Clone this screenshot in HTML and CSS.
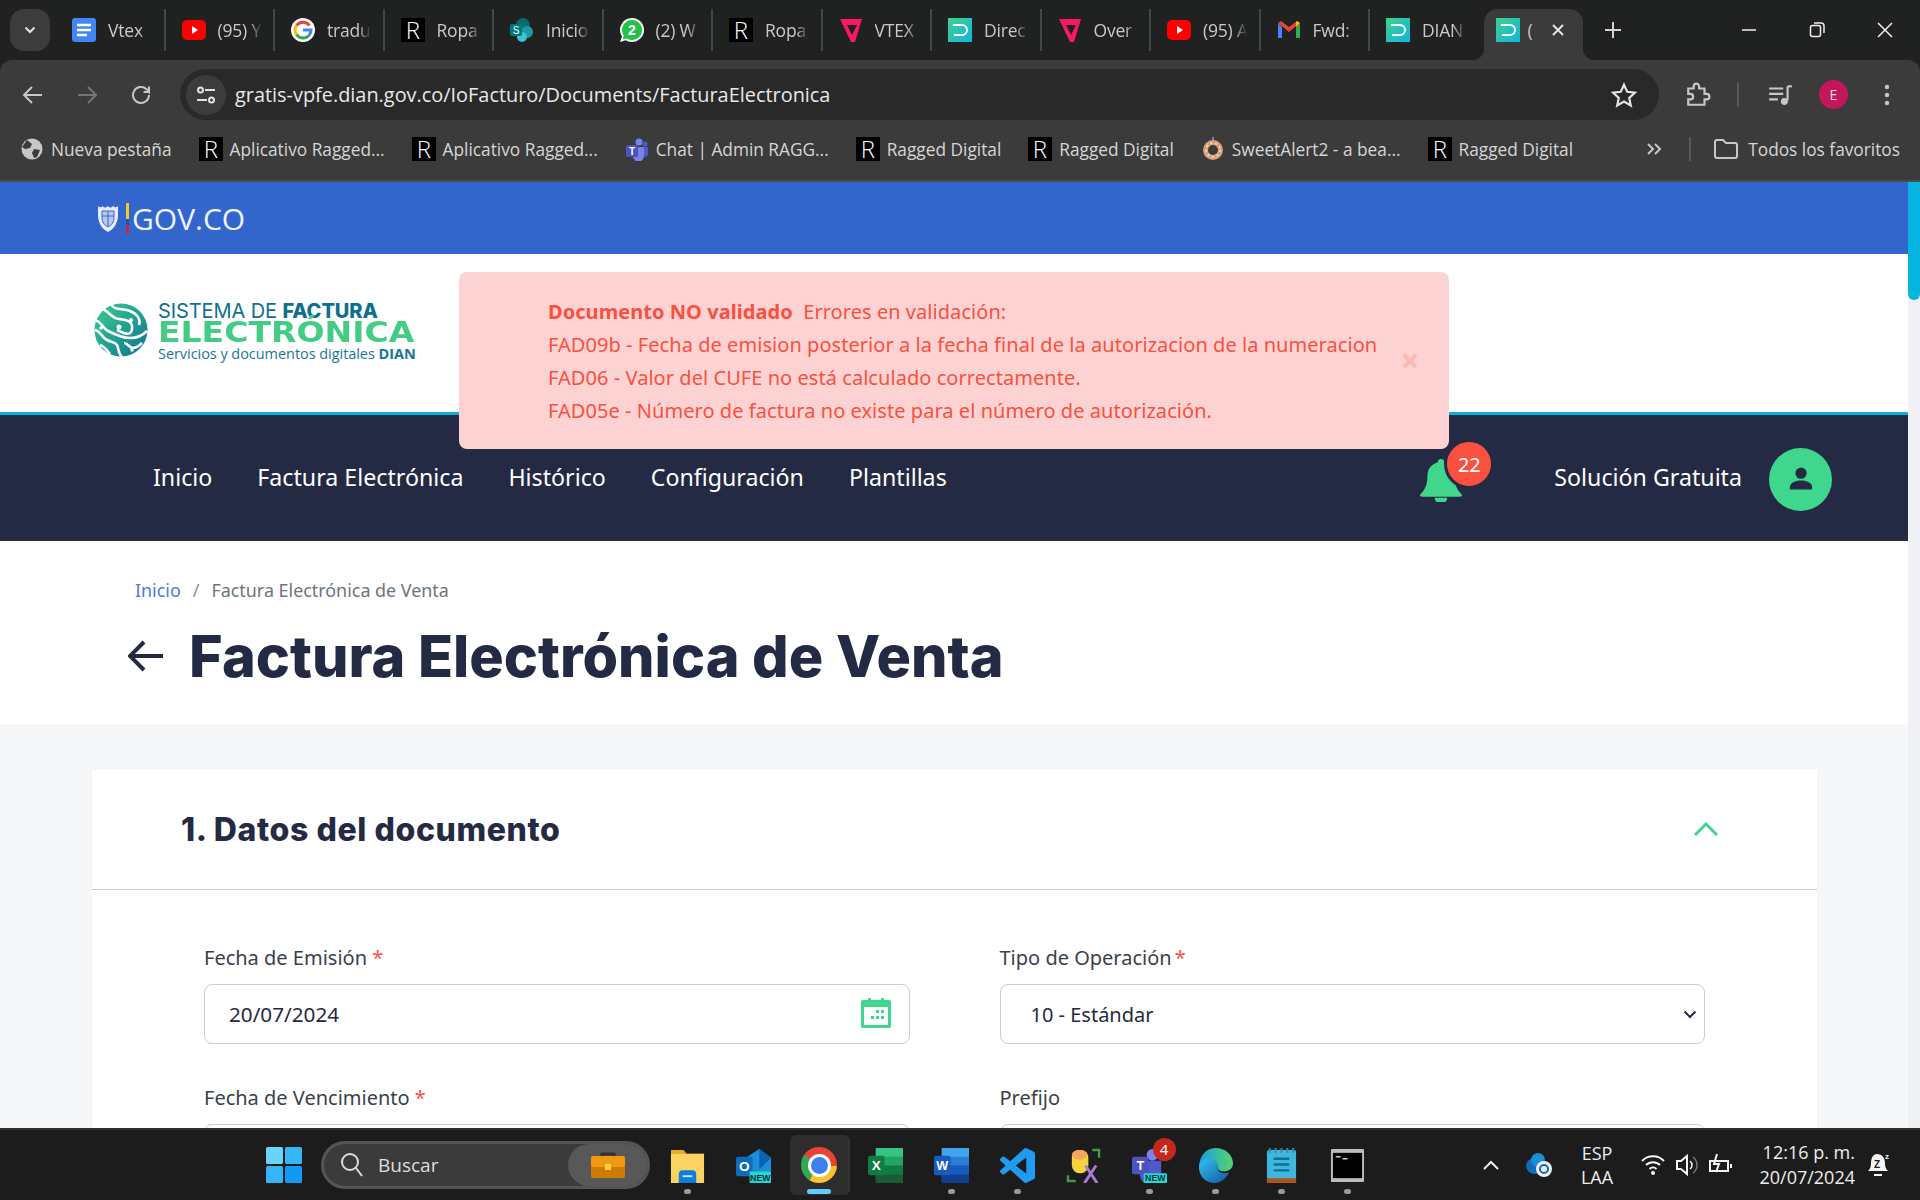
FILE: index.html
```html
<!DOCTYPE html>
<html lang="es">
<head>
<meta charset="utf-8">
<title>Factura Electrónica de Venta</title>
<link rel="stylesheet" href="styles.css">
</head>
<body>
<svg class="defs" width="0" height="0" aria-hidden="true">
  <defs>
    <linearGradient id="dianGrad" x1="0" y1="0" x2="1" y2="1"><stop offset="0" stop-color="#3fd08a"/><stop offset="1" stop-color="#10b6e0"/></linearGradient>
    <linearGradient id="edgeGrad" x1="0" y1="0" x2="1" y2="1"><stop offset="0" stop-color="#35c1f1"/><stop offset="1" stop-color="#0c59a4"/></linearGradient>
    <linearGradient id="edgeGreen" x1="0" y1="0" x2="1" y2="0"><stop offset="0" stop-color="#1b9de2"/><stop offset="1" stop-color="#54d66b"/></linearGradient>
    <linearGradient id="globeGrad" x1="0" y1="0" x2="1" y2="1"><stop offset="0" stop-color="#3fcf8e"/><stop offset=".55" stop-color="#1f9c92"/><stop offset="1" stop-color="#10708f"/></linearGradient>
    <symbol id="docs" viewBox="0 0 24 24"><rect x="0" y="0" width="24" height="24" rx="3" fill="#4285f4"/><path d="M5 7h14M5 12h14M5 17h10" stroke="#fff" stroke-width="2.4"/></symbol>
    <symbol id="yt" viewBox="0 0 24 24"><rect x="0" y="2" width="24" height="20" rx="5" fill="#f00"/><path d="M10 8l6 4-6 4z" fill="#fff"/></symbol>
    <symbol id="google" viewBox="0 0 24 24"><circle cx="12" cy="12" r="12" fill="#fff"/><path d="M18.500 7.500A8 8 0 0 0 5.500 7.500" fill="none" stroke="#ea4335" stroke-width="3"/><path d="M5.500 7.500a8 8 0 0 0 0 9" fill="none" stroke="#fbbc05" stroke-width="3"/><path d="M5.500 16.500a8 8 0 0 0 12.500 1" fill="none" stroke="#34a853" stroke-width="3"/><path d="M12 12h8a8 8 0 0 1-2 5.500" fill="none" stroke="#4285f4" stroke-width="3"/></symbol>
    <symbol id="sp" viewBox="0 0 24 24"><circle cx="13" cy="7" r="7" fill="#036c70"/><circle cx="17" cy="14" r="6" fill="#1a9ba1"/><circle cx="12" cy="19" r="5" fill="#37c6d0"/><rect x="0" y="6" width="12" height="12" rx="2" fill="#03787c"/><text x="6" y="16" class="svg-t" font-size="10" text-anchor="middle" fill="#fff">S</text></symbol>
    <symbol id="wa" viewBox="0 0 24 24"><path d="M12 0a12 12 0 0 0-10 18.500L0 24l5.700-1.800A12 12 0 1 0 12 0z" fill="#fff"/><path d="M12 2a10 10 0 0 0-8.300 15.500L2.700 21.500l4-1.100A10 10 0 1 0 12 2z" fill="#25c24a"/><text x="12" y="17" class="svg-t" font-size="14" font-weight="700" text-anchor="middle" fill="#fff">2</text></symbol>
    <symbol id="vtex" viewBox="0 0 24 24"><path d="M1 1h22l-7 23h-4z" fill="#f71963"/><path d="M8 7h10l-5 10z" fill="#1f2020"/></symbol>
    <symbol id="dian" viewBox="0 0 24 24"><rect width="24" height="24" fill="url(#dianGrad)"/><path d="M5 7h9a5 5 0 0 1 0 10H6" fill="none" stroke="#fff" stroke-width="2"/></symbol>
    <symbol id="gmail" viewBox="0 0 24 24"><path d="M1 5v15h4V9z" fill="#4285f4"/><path d="M23 5v15h-4V9z" fill="#34a853"/><path d="M1 5l11 9 11-9-3-2-8 6-8-6z" fill="#ea4335"/><path d="M19 9l4-4-3-2-1 1z" fill="#fbbc05"/></symbol>
    <symbol id="rlogo" viewBox="0 0 24 24"><rect width="24" height="24" fill="#000"/><text x="12" y="21" class="svg-r" font-size="24" text-anchor="middle" fill="#fff">R</text></symbol>
    <symbol id="globe" viewBox="0 0 24 24"><circle cx="12" cy="12" r="10.500" fill="#c7c7c7"/><path d="M7 3l5 4-2 4-5 1-3-2zM14 12l6 1-3 7-3 1-2-5z" fill="#3b3b3b"/></symbol>
    <symbol id="teamsb" viewBox="0 0 24 24"><circle cx="14" cy="5" r="3.500" fill="#7b83eb"/><circle cx="20" cy="7" r="2.500" fill="#5059c9"/><path d="M17 10h6v7a3 3 0 0 1-6 0z" fill="#5059c9"/><path d="M8 10h11v9a5 5 0 0 1-11 0z" fill="#7b83eb"/><rect x="1" y="8" width="12" height="12" rx="1.500" fill="#4b53bc"/><text x="7" y="18" class="svg-t" font-size="10" font-weight="700" text-anchor="middle" fill="#fff">T</text></symbol>
    <symbol id="donut" viewBox="0 0 24 24"><circle cx="12" cy="13" r="7.500" fill="none" stroke="#d9a27c" stroke-width="5"/><circle cx="12" cy="13" r="7" fill="none" stroke="#f3d6c0" stroke-width="2" stroke-dasharray="2 3"/><path d="M12 0v3" stroke="#8a78c0" stroke-width="2"/></symbol>
    <symbol id="person" viewBox="0 0 24 24"><circle cx="12" cy="7" r="4.800"/><path d="M2.500 21v-2.500c0-3.500 6-5.200 9.500-5.200s9.500 1.700 9.500 5.200V21z"/></symbol>
  </defs>
</svg>

<header class="chrome">
  <div class="tabstrip">
    <button class="tab-search" aria-label="Buscar pestañas"><svg width="12" height="8" viewBox="0 0 12 8"><path d="M1.500 1.500L6 6l4.500-4.500" fill="none" stroke="#e3e3e3" stroke-width="2"/></svg></button>
    <div class="tab"><svg class="fav"><use href="#docs"/></svg><span class="tab-t">Vtex</span></div>
    <div class="tab"><svg class="fav"><use href="#yt"/></svg><span class="tab-t">(95) Y</span></div>
    <div class="tab"><svg class="fav"><use href="#google"/></svg><span class="tab-t">tradu</span></div>
    <div class="tab"><svg class="fav"><use href="#rlogo"/></svg><span class="tab-t">Ropa</span></div>
    <div class="tab"><svg class="fav"><use href="#sp"/></svg><span class="tab-t">Inicio</span></div>
    <div class="tab"><svg class="fav"><use href="#wa"/></svg><span class="tab-t">(2) W</span></div>
    <div class="tab"><svg class="fav"><use href="#rlogo"/></svg><span class="tab-t">Ropa</span></div>
    <div class="tab"><svg class="fav"><use href="#vtex"/></svg><span class="tab-t">VTEX</span></div>
    <div class="tab"><svg class="fav"><use href="#dian"/></svg><span class="tab-t">Direc</span></div>
    <div class="tab"><svg class="fav"><use href="#vtex"/></svg><span class="tab-t">Over</span></div>
    <div class="tab"><svg class="fav"><use href="#yt"/></svg><span class="tab-t">(95) A</span></div>
    <div class="tab"><svg class="fav"><use href="#gmail"/></svg><span class="tab-t">Fwd:</span></div>
    <div class="tab tab-last"><svg class="fav"><use href="#dian"/></svg><span class="tab-t">DIAN</span></div>
    <div class="tab-active"><svg class="fav"><use href="#dian"/></svg><span class="tab-t tab-t-active">(</span><svg class="tab-x" width="14" height="14" viewBox="0 0 14 14"><path d="M2 2l10 10M12 2L2 12" stroke="#e8e8e8" stroke-width="1.800"/></svg></div>
    <svg class="newtab" width="18" height="18" viewBox="0 0 18 18"><path d="M9 1v16M1 9h16" stroke="#d5d5d5" stroke-width="2"/></svg>
    <div class="winctl">
      <svg width="16" height="16" viewBox="0 0 16 16"><path d="M1 8h14" stroke="#eee" stroke-width="1.500"/></svg>
      <svg width="16" height="16" viewBox="0 0 16 16"><rect x="1.500" y="3.500" width="10" height="11" rx="2" fill="none" stroke="#eee" stroke-width="1.500"/><path d="M5 1h7a3 3 0 0 1 3 3v7" fill="none" stroke="#eee" stroke-width="1.500"/></svg>
      <svg width="16" height="16" viewBox="0 0 16 16"><path d="M1 1l14 14M15 1L1 15" stroke="#eee" stroke-width="1.500"/></svg>
    </div>
  </div>
  <div class="toolbar">
    <svg class="tb-ic" viewBox="0 0 24 24"><path d="M21 12H4M11 4l-8 8 8 8" fill="none" stroke="#c7c7c7" stroke-width="2"/></svg>
    <svg class="tb-ic" viewBox="0 0 24 24"><path d="M3 12h17M13 4l8 8-8 8" fill="none" stroke="#757575" stroke-width="2"/></svg>
    <svg class="tb-ic" viewBox="0 0 24 24"><path d="M20 12a8 8 0 1 1-2.500-5.800L20 9V3.500M20 9h-5.500" fill="none" stroke="#c7c7c7" stroke-width="2"/></svg>
    <div class="omnibox">
      <span class="site-info"><svg width="20" height="20" viewBox="0 0 20 20"><circle cx="4.500" cy="5" r="2.500" fill="none" stroke="#e0e0e0" stroke-width="2"/><path d="M9 5h10M1 15h10" stroke="#e0e0e0" stroke-width="2"/><circle cx="15.500" cy="15" r="2.500" fill="none" stroke="#e0e0e0" stroke-width="2"/></svg></span>
      <span class="url">gratis-vpfe.dian.gov.co/IoFacturo/Documents/FacturaElectronica</span>
      <svg class="star" viewBox="0 0 24 24"><path d="M12 2.500l3 6.600 7.100.8-5.300 4.800 1.500 7-6.300-3.600-6.300 3.600 1.500-7L1.900 9.900 9 9.100z" fill="none" stroke="#e3e3e3" stroke-width="2"/></svg>
    </div>
    <svg class="tb-ext" viewBox="0 0 24 24"><path d="M3 6h5V4a2.500 2.500 0 0 1 5 0v2h5v5h2a2.500 2.500 0 0 1 0 5h-2v5H3v-5h2a2.500 2.500 0 0 0 0-5H3z" fill="none" stroke="#c7c7c7" stroke-width="2"/></svg>
    <span class="tb-sep"></span>
    <svg class="tb-media" viewBox="0 0 24 24"><path d="M2 6h13M2 11h13M2 16h8" stroke="#c7c7c7" stroke-width="2"/><path d="M19 4v13" stroke="#c7c7c7" stroke-width="2"/><path d="M19 4h4" stroke="#c7c7c7" stroke-width="2"/><circle cx="16" cy="18" r="3.200" fill="#c7c7c7"/></svg>
    <span class="avatar-e">E</span>
    <svg class="tb-dots" viewBox="0 0 6 24"><circle cx="3" cy="4" r="2.200" fill="#c7c7c7"/><circle cx="3" cy="12" r="2.200" fill="#c7c7c7"/><circle cx="3" cy="20" r="2.200" fill="#c7c7c7"/></svg>
  </div>
  <div class="bookmarks">
    <div class="bm"><svg class="bm-ic"><use href="#globe"/></svg><span>Nueva pestaña</span></div>
    <div class="bm"><svg class="bm-ic"><use href="#rlogo"/></svg><span>Aplicativo Ragged...</span></div>
    <div class="bm"><svg class="bm-ic"><use href="#rlogo"/></svg><span>Aplicativo Ragged...</span></div>
    <div class="bm"><svg class="bm-ic"><use href="#teamsb"/></svg><span>Chat | Admin RAGG...</span></div>
    <div class="bm"><svg class="bm-ic"><use href="#rlogo"/></svg><span>Ragged Digital</span></div>
    <div class="bm"><svg class="bm-ic"><use href="#rlogo"/></svg><span>Ragged Digital</span></div>
    <div class="bm"><svg class="bm-ic"><use href="#donut"/></svg><span>SweetAlert2 - a bea...</span></div>
    <div class="bm"><svg class="bm-ic"><use href="#rlogo"/></svg><span>Ragged Digital</span></div>
    <div class="bm-end">
      <svg width="16" height="14" viewBox="0 0 16 14"><path d="M2 2l5 5-5 5M9 2l5 5-5 5" fill="none" stroke="#c7c7c7" stroke-width="2"/></svg>
      <span class="bm-sep"></span>
      <svg width="26" height="22" viewBox="0 0 26 22"><path d="M2 4a2 2 0 0 1 2-2h6l3 3h9a2 2 0 0 1 2 2v11a2 2 0 0 1-2 2H4a2 2 0 0 1-2-2z" fill="none" stroke="#c7c7c7" stroke-width="2"/></svg>
      <span class="bm-all">Todos los favoritos</span>
    </div>
  </div>
</header>

<div class="viewport">
  <main class="page">
    <div class="gov-bar">
      <svg class="gov-shield" width="22" height="30" viewBox="0 0 22 30"><path d="M1 3c2 2 4 1 5 0 1 2 3 2 5 0 2 2 3 2 5 0 1 1 3 2 5 0v9c0 8-4 14-10 17C5 26 1 20 1 12z" fill="#e6ecf9"/><path d="M5 8h12v6c0 5-2 8-6 10-4-2-6-5-6-10z" fill="#b9c9ee" stroke="#3366cc"/><path d="M5 13h12M11 8v16" stroke="#3366cc"/></svg>
      <span class="gov-flag"></span>
      <span class="gov-text">GOV.CO</span>
    </div>
    <div class="brand">
      <svg class="brand-globe" width="54" height="54" viewBox="0 0 54 54">
        <circle cx="27" cy="27" r="26.500" fill="url(#globeGrad)"/>
        <g fill="none" stroke="#fff" stroke-width="2.600">
          <path d="M17 1c3 7 12 4 19 7s11 8 9 14"/>
          <path d="M8 6c6 1 9 9 17 10s14 2 13 10-9 4-15 1"/>
          <path d="M0 17c7 0 8 8 14 11s14 7 22 7 13-3 17-7"/>
          <path d="M1 27c6 1 6 7 12 10s10 2 11 8 2 7 4 9"/>
          <path d="M6 42c4 1 7 5 10 9"/>
          <path d="M30 40c4 0 5 5 9 5s7-3 9-5"/>
        </g>
        <circle cx="25" cy="24" r="2.500" fill="#fff"/><circle cx="37" cy="17" r="2" fill="#fff"/><circle cx="7" cy="25" r="1.800" fill="#fff"/><circle cx="38" cy="47" r="1.800" fill="#fff"/>
      </svg>
      <div class="brand-text">
        <div class="brand-l1">SISTEMA DE <b>FACTURA</b></div>
        <div class="brand-l2">ELECTRÓNICA</div>
        <div class="brand-l3">Servicios y documentos digitales <b>DIAN</b></div>
      </div>
      <span class="brand-rule"></span>
    </div>
    <nav class="mainnav">
      <a class="nav-i">Inicio</a>
      <a class="nav-i">Factura Electrónica</a>
      <a class="nav-i">Histórico</a>
      <a class="nav-i">Configuración</a>
      <a class="nav-i">Plantillas</a>
      <div class="nav-right">
        <div class="bell-wrap">
          <svg class="bell" viewBox="0 0 42 42"><path d="M21 1c2 0 3 1 3 3 7 2 10 7 10 14 0 7 2 12 6 16 2 2 1 3-1 3H3c-2 0-3-1-1-3 4-4 6-9 6-16 0-7 3-12 10-14 0-2 1-3 3-3z"/><path d="M15 38h12c0 3-2 5-6 5s-6-2-6-5z"/></svg>
          <span class="badge">22</span>
        </div>
        <span class="nav-user">Solución Gratuita</span>
        <span class="user-circle"><svg width="28" height="28"><use href="#person"/></svg></span>
      </div>
    </nav>
    <section class="titleblock">
      <div class="crumbs"><a class="crumb-a">Inicio</a><span class="crumb-s">/</span><span class="crumb-c">Factura Electrónica de Venta</span></div>
      <div class="title-row">
        <svg class="back" width="36" height="36" viewBox="0 0 36 36"><path d="M35 18H3M16 4L2 18l14 14" fill="none" stroke="#252a44" stroke-width="4"/></svg>
        <h1 class="title">Factura Electrónica de Venta</h1>
      </div>
    </section>
    <section class="content">
      <div class="card">
        <div class="card-head">
          <h2 class="card-title">1. Datos del documento</h2>
          <svg width="26" height="16" viewBox="0 0 26 16"><path d="M2 14L13 3l11 11" fill="none" stroke="#3fd68d" stroke-width="3"/></svg>
        </div>
        <div class="form">
          <div class="field">
            <label class="lbl">Fecha de Emisión <i>*</i></label>
            <div class="input-wrap">
              <input class="ctl" value="20/07/2024">
              <svg class="cal" width="30" height="30" viewBox="0 0 30 30"><path d="M7 0h3v4H7zM20 0h3v4h-3z" fill="#3fd68d"/><rect y="2" width="30" height="28" rx="2" fill="#3fd68d"/><rect x="3" y="9" width="24" height="18" fill="#fff"/><path d="M15 12h3v3h-3zM20 12h3v3h-3zM10 18h3v3h-3zM15 18h3v3h-3zM20 18h3v3h-3z" fill="#3fd68d"/></svg>
            </div>
          </div>
          <div class="field">
            <label class="lbl">Tipo de Operación<i class="star-tight">*</i></label>
            <div class="input-wrap">
              <select class="ctl sel"><option>10 - Estándar</option></select>
              <svg class="sel-chev" width="14" height="9" viewBox="0 0 14 9"><path d="M1.500 1.500L7 7l5.500-5.500" fill="none" stroke="#252a44" stroke-width="2"/></svg>
            </div>
          </div>
          <div class="field">
            <label class="lbl">Fecha de Vencimiento <i>*</i></label>
            <input class="ctl" value="">
          </div>
          <div class="field">
            <label class="lbl">Prefijo</label>
            <input class="ctl" value="">
          </div>
        </div>
      </div>
    </section>
  </main>
  <div class="scrollbar"><span class="thumb"></span></div>
  <div class="toast">
    <div class="toast-body">
      <p><b>Documento NO validado</b>&nbsp; Errores en validación:</p>
      <p>FAD09b - Fecha de emision posterior a la fecha final de la autorizacion de la numeracion</p>
      <p>FAD06 - Valor del CUFE no está calculado correctamente.</p>
      <p>FAD05e - Número de factura no existe para el número de autorización.</p>
    </div>
    <svg class="toast-x" width="16" height="16" viewBox="0 0 16 16"><path d="M2 2l12 12M14 2L2 14" stroke="#fdb9b6" stroke-width="4"/></svg>
  </div>
</div>

<footer class="taskbar">
  <svg class="win" width="36" height="36" viewBox="0 0 36 36"><rect width="17" height="17" x="0" y="0" rx="1.500" fill="#6cd4fb"/><rect width="17" height="17" x="19" y="0" rx="1.500" fill="#35b6f8"/><rect width="17" height="17" x="0" y="19" rx="1.500" fill="#35b6f8"/><rect width="17" height="17" x="19" y="19" rx="1.500" fill="#119af5"/></svg>
  <div class="searchpill">
    <svg width="24" height="26" viewBox="0 0 24 26"><circle cx="10" cy="10" r="8" fill="none" stroke="#ddd" stroke-width="2"/><path d="M16 16l6 8" stroke="#ddd" stroke-width="2"/></svg>
    <span class="buscar">Buscar</span>
    <span class="pill-in"><svg width="34" height="26" viewBox="0 0 34 26"><path d="M11 4V2h12v2" fill="none" stroke="#333" stroke-width="3"/><rect y="4" width="34" height="22" rx="2" fill="#d07a00"/><rect y="4" width="34" height="11" rx="2" fill="#f09a10"/><rect x="14" y="12" width="6" height="6" fill="#f7d24a"/></svg></span>
  </div>
  <div class="tb-cell"><svg class="app" viewBox="0 0 36 36"><path d="M1 2h13l3 4h18v30H1z" fill="#e9a825"/><rect x="1" y="6" width="34" height="30" fill="#fdd463"/><path d="M9 36v-9a4 4 0 0 1 4-4h10a4 4 0 0 1 4 4v9z" fill="#0f7cd6"/><rect x="13" y="28" width="10" height="2" fill="#bde3ff"/></svg><span class="dot"></span></div>
  <div class="tb-cell"><svg class="app" viewBox="0 0 36 36"><path d="M10 10L24 1l12 9v14H10z" fill="#1a8ed8"/><path d="M24 1l12 9-12 12z" fill="#0b62b0"/><rect x="0" y="9" width="17" height="20" rx="2" fill="#0f6cbd"/><text x="8.500" y="24" class="svg-t" font-size="14" font-weight="700" text-anchor="middle" fill="#fff">O</text><rect x="14" y="24" width="22" height="12" rx="1" fill="#24d6d6"/><text x="25" y="33.500" class="svg-t" font-size="9" font-weight="700" text-anchor="middle" fill="#033">NEW</text></svg><span class="dot dot-none"></span></div>
  <div class="tb-cell tb-cell-on"><span class="chrome-ic"><span class="chrome-in"></span></span><span class="dot dot-on"></span></div>
  <div class="tb-cell"><svg class="app" viewBox="0 0 36 36"><rect x="8" y="0" width="28" height="36" rx="2" fill="#21a366"/><rect x="8" y="0" width="28" height="9" fill="#33c481"/><rect x="8" y="18" width="28" height="9" fill="#107c41"/><rect x="8" y="27" width="28" height="9" fill="#185c37"/><rect x="0" y="8" width="17" height="20" rx="2" fill="#107c41"/><text x="8.500" y="23" class="svg-t" font-size="14" font-weight="700" text-anchor="middle" fill="#fff">X</text></svg><span class="dot dot-none"></span></div>
  <div class="tb-cell"><svg class="app" viewBox="0 0 36 36"><rect x="8" y="0" width="28" height="36" rx="2" fill="#2b7cd3"/><rect x="8" y="0" width="28" height="9" fill="#41a5ee"/><rect x="8" y="18" width="28" height="9" fill="#185abd"/><rect x="8" y="27" width="28" height="9" fill="#103f91"/><rect x="0" y="8" width="17" height="20" rx="2" fill="#185abd"/><text x="8.500" y="23" class="svg-t" font-size="13" font-weight="700" text-anchor="middle" fill="#fff">W</text></svg><span class="dot"></span></div>
  <div class="tb-cell"><svg class="app" viewBox="0 0 24 24"><path fill="#1f9cf0" d="M23.150 2.587L18.210.21a1.494 1.494 0 0 0-1.705.29l-9.460 8.630-4.120-3.128a.999.999 0 0 0-1.276.057L.327 7.261A1 1 0 0 0 .326 8.740L3.899 12 .326 15.260a1 1 0 0 0 .001 1.479L1.650 17.940a.999.999 0 0 0 1.276.057l4.120-3.128 9.460 8.630a1.492 1.492 0 0 0 1.704.29l4.942-2.377A1.500 1.500 0 0 0 24 20.060V3.939a1.500 1.500 0 0 0-.85-1.352zm-5.146 14.861L10.826 12l7.178-5.448v10.896z"/></svg><span class="dot"></span></div>
  <div class="tb-cell"><svg class="app" viewBox="0 0 36 36"><rect x="6" y="2" width="17" height="24" rx="8" fill="#f5d33f"/><ellipse cx="14" cy="7" rx="8" ry="5" fill="#f2a65a"/><path d="M2 28v6h8M27 2h7v8" fill="none" stroke="#3d9a46" stroke-width="2.500"/><path d="M19 36l12-18M32 36L20 18" stroke="#a77bd9" stroke-width="3"/></svg><span class="dot dot-none"></span></div>
  <div class="tb-cell"><span class="teams-wrap"><svg class="app" viewBox="0 0 36 36"><circle cx="21" cy="7" r="6" fill="#7b83eb"/><path d="M8 13h22v14a8 8 0 0 1-22 0z" fill="#5059c9"/><rect x="0" y="9" width="17" height="18" rx="2" fill="#4b53bc"/><text x="8.500" y="23" class="svg-t" font-size="13" font-weight="700" text-anchor="middle" fill="#fff">T</text><rect x="12" y="26" width="24" height="10" rx="1" fill="#24d6d6"/><text x="24" y="34.300" class="svg-t" font-size="9" font-weight="700" text-anchor="middle" fill="#033">NEW</text></svg><span class="teams-badge">4</span></span><span class="dot"></span></div>
  <div class="tb-cell"><svg class="app" viewBox="0 0 36 36"><path d="M18 0c10 0 18 7 18 16 0 5-4 8-9 8-6 0-7-3-7-5 0-6-7-9-13-6C1 16 1 20 1 20 1 9 8 0 18 0z" fill="url(#edgeGreen)"/><path d="M1 20c0-5 5-9 10-9 6 0 9 4 9 8 0 5 3 7 7 7 1 0 3 0 5-1-3 7-9 11-15 11C8 36 1 29 1 20z" fill="url(#edgeGrad)"/></svg><span class="dot"></span></div>
  <div class="tb-cell"><svg class="app" viewBox="0 0 30 36"><rect y="2" width="30" height="34" rx="2" fill="#3fb6dc"/><rect y="31" width="30" height="5" fill="#a8561c"/><path d="M3 0v5M9 0v5M15 0v5M21 0v5M27 0v5" stroke="#2b8cad" stroke-width="2"/><path d="M7 11h16M7 17h16M7 23h16" stroke="#136e90" stroke-width="2.500"/></svg><span class="dot"></span></div>
  <div class="tb-cell"><svg class="app" viewBox="0 0 34 36"><rect width="34" height="34" y="1" rx="1" fill="#b9bcc0"/><rect x="2" y="5" width="30" height="26" fill="#000"/><path d="M5 9h5M12 11h5" stroke="#ccc" stroke-width="1.500"/></svg><span class="dot"></span></div>
  <div class="tray">
    <svg class="tray-chev" width="18" height="12" viewBox="0 0 18 12"><path d="M2 10l7-7 7 7" fill="none" stroke="#f0f0f0" stroke-width="2"/></svg>
    <svg class="tray-od" width="28" height="26" viewBox="0 0 28 26"><ellipse cx="10" cy="14" rx="9" ry="8" fill="#0f6cbd"/><circle cx="13" cy="8" r="7" fill="#1a8ed8"/><circle cx="19" cy="17" r="8" fill="#f0f0f0"/><circle cx="19" cy="17" r="4" fill="none" stroke="#0f6cbd" stroke-width="2"/></svg>
    <div class="lang"><span>ESP</span><span>LAA</span></div>
    <svg class="tray-wifi" width="26" height="26" viewBox="0 0 26 26"><path d="M2 9a15 15 0 0 1 22 0M6 13a10 10 0 0 1 14 0M9.500 17a5 5 0 0 1 7 0" fill="none" stroke="#f5f5f5" stroke-width="2"/><circle cx="13" cy="21" r="2" fill="#f5f5f5"/></svg>
    <svg class="tray-vol" width="24" height="24" viewBox="0 0 24 24"><path d="M2 8h4l6-5v18l-6-5H2z" fill="none" stroke="#f5f5f5" stroke-width="2"/><path d="M15 8a5 5 0 0 1 0 8" fill="none" stroke="#f5f5f5" stroke-width="1.500"/><path d="M18 4a10 10 0 0 1 0 16" fill="none" stroke="#777" stroke-width="1.500"/></svg>
    <svg class="tray-bat" width="26" height="24" viewBox="0 0 26 24"><path d="M2 8h18v10H2z" fill="none" stroke="#f5f5f5" stroke-width="2"/><path d="M22 11h2v4h-2" fill="#f5f5f5"/><path d="M9 1L6 11h5l-3 8" fill="none" stroke="#f5f5f5" stroke-width="2"/></svg>
    <div class="clock"><span>12:16 p. m.</span><span>20/07/2024</span></div>
    <svg class="tray-bell" width="24" height="28" viewBox="0 0 24 28"><path d="M10 3c5 0 8 4 8 9 0 4 1 6 3 8H1c2-2 3-4 3-8 0-5 2-9 6-9z" fill="#f5f5f5"/><path d="M7 23h8v2H7z" fill="#f5f5f5"/><text x="10" y="17" class="svg-t" font-size="10" font-weight="700" text-anchor="middle" fill="#1c1c1c">Z</text><text x="20" y="8" class="svg-t" font-size="8" font-weight="700" text-anchor="middle" fill="#f5f5f5">z</text></svg>
  </div>
</footer>
</body>
</html>
```
FILE: styles.css
```css
* { box-sizing: border-box; }
html, body { margin: 0; padding: 0; height: 1200px; overflow: hidden; }
body { display: flex; flex-direction: column; width: 1920px; font-family: "Noto Sans", sans-serif; background: #fff; }
.defs { position: absolute; }
.svg-t { font-family: "Liberation Sans", sans-serif; }
.svg-r { font-family: "Open Sans", sans-serif; font-weight: 300; }

.chrome { flex: 0 0 182px; background: #202121; font-family: "Open Sans", sans-serif; color: #d8d8d8; }
.tabstrip { height: 60px; display: flex; align-items: flex-start; padding: 9px 0 0 10px; position: relative; }
.tab-search { width: 40px; height: 42px; border: 0; border-radius: 14px; background: #3c3c3c; display: flex; align-items: center; justify-content: center; margin-right: 6px; }
.tab { width: 109.5px; height: 42px; display: flex; align-items: center; padding-left: 16px; gap: 12px; border-right: 2px solid #454646; overflow: hidden; }
.tab-last { border-right: 0; }
.fav { width: 24px; height: 24px; flex: none; }
.tab-t { font-size: 17.5px; color: #c9c9c9; white-space: nowrap; width: 52px; -webkit-mask-image: linear-gradient(90deg, #000 60%, transparent 85%); mask-image: linear-gradient(90deg, #000 60%, transparent 85%); letter-spacing: -.2px; }
.tab-active { width: 99px; height: 51px; margin-left: 4px; background: #3b3b3b; border-radius: 14px 14px 0 0; display: flex; align-items: center; padding: 0 12px 9px 12px; gap: 8px; position: relative; }
.tab-active::before, .tab-active::after { content: ""; position: absolute; bottom: 0; width: 12px; height: 12px; }
.tab-active::before { left: -12px; background: radial-gradient(circle at 0 0, transparent 12px, #3b3b3b 12.5px); }
.tab-active::after { right: -12px; background: radial-gradient(circle at 100% 0, transparent 12px, #3b3b3b 12.5px); }
.tab-t-active { width: 8px; -webkit-mask-image: none; mask-image: none; }
.tab-x { flex: none; margin-left: 7px; }
.newtab { margin: 12px 0 0 21px; }
.winctl { position: absolute; top: 22px; left: 1741px; display: flex; gap: 52px; }

.toolbar { height: 60px; background: #3b3b3b; border-radius: 12px 12px 0 0; display: flex; align-items: center; padding: 9px 16px 0 21px; }
.tb-ic { width: 24px; height: 24px; margin-right: 30px; flex: none; }
.omnibox { margin-left: -3px; width: 1479px; height: 51px; border-radius: 26px; background: #292929; display: flex; align-items: center; padding: 0 22px 0 6px; }
.site-info { width: 40px; height: 40px; border-radius: 50%; background: #3c3c3c; display: flex; align-items: center; justify-content: center; flex: none; }
.url { margin-left: 9px; font-size: 19.9px; color: #e8e8e8; white-space: nowrap; flex: 1; }
.star { width: 26px; height: 26px; flex: none; }
.tb-ext { width: 26px; height: 26px; margin-left: 26px; flex: none; }
.tb-sep { width: 2px; height: 24px; background: #5a5a5a; margin-left: 26px; flex: none; }
.tb-media { width: 26px; height: 26px; margin-left: 28px; flex: none; }
.avatar-e { width: 29px; height: 29px; border-radius: 50%; background: #c2185b; color: #f5d9e4; font-size: 14px; display: flex; align-items: center; justify-content: center; margin-left: 26px; flex: none; }
.tb-dots { width: 6px; height: 24px; margin-left: 36px; flex: none; }

.bookmarks { height: 62px; background: #3b3b3b; display: flex; align-items: center; padding: 0 0 2px 20px; border-bottom: 2px solid #4a4a4a; font-size: 17.3px; color: #d6d6d6; white-space: nowrap; }
.bm { display: flex; align-items: center; gap: 7px; margin-right: 27px; }
.bm-ic { width: 24px; height: 24px; flex: none; }
.bm-end { margin-left: auto; display: flex; align-items: center; padding-right: 20px; }
.bm-sep { width: 2px; height: 24px; background: #5a5a5a; margin: 0 22px 0 27px; }
.bm-all { margin-left: 9px; }

.viewport { flex: 1; display: flex; position: relative; overflow: hidden; min-height: 0; }
.page { flex: 1; min-width: 0; background: #f6f7f9; }
.scrollbar { flex: 0 0 12px; background: #eff1f4; }
.thumb { display: block; height: 118px; background: #05b5e0; border-radius: 0 0 8px 8px; }

.gov-bar { height: 72px; background: #3366cc; display: flex; align-items: center; padding-left: 97px; }
.gov-shield { flex: none; }
.gov-flag { width: 3px; height: 31px; margin: 0 3px 0 7px; background: linear-gradient(#f0c929 0 50%, #1f56a6 50% 72%, #c8264a 72%); }
.gov-text { color: #eef2fb; font-family: "Open Sans", sans-serif; font-weight: 500; font-size: 30px; }

.brand { height: 161px; background: #fff; border-bottom: 3px solid #0ab0d9; display: flex; align-items: center; padding: 0 0 0 94px; position: relative; }
.brand-globe { flex: none; margin-top: -6px; }
.brand-text { margin-left: 10px; margin-top: -2px; width: 260px; }
.brand-l1 { font-family: "Inter", sans-serif; font-size: 20px; line-height: 22px; color: #0f6f8f; white-space: nowrap; letter-spacing: -.1px; }
.brand-l1 b { font-weight: 800; }
.brand-l2 { font-family: "DejaVu Sans", sans-serif; font-size: 28px; line-height: 22.5px; font-weight: 700; color: #45cc84; white-space: nowrap; transform: scaleX(1.18); transform-origin: left center; }
.brand-l3 { font-family: "Open Sans", sans-serif; font-size: 14.5px; line-height: 20px; color: #1a7796; white-space: nowrap; letter-spacing: -.05px; }
.brand-l3 b { font-weight: 700; }
.brand-rule { position: absolute; left: 459px; top: 49px; width: 1px; height: 60px; background: #555; }

.mainnav { height: 126px; background: #252a44; display: flex; align-items: center; padding: 0 0 2px 153px; gap: 45px; color: #fff; }
.nav-i { font-size: 23.2px; white-space: nowrap; }
.nav-right { margin-left: auto; display: flex; align-items: center; padding-right: 76px; }
.bell-wrap { width: 133px; height: 60px; position: relative; }
.bell { position: absolute; left: -2px; top: 11px; width: 44px; height: 44px; fill: #3fd68d; }
.badge { position: absolute; left: 23px; top: -8px; width: 50px; height: 50px; border-radius: 50%; background: #f9503f; border: 3px solid #252a44; display: flex; align-items: center; justify-content: center; font-size: 20px; color: #fff; }
.nav-user { font-size: 23.2px; white-space: nowrap; }
.user-circle { width: 63px; height: 63px; border-radius: 50%; background: #3fd68d; display: flex; align-items: center; justify-content: center; margin-left: 27px; fill: #252a44; margin-top: 4px; }

.titleblock { background: #fff; height: 183px; padding: 37px 0 0 135px; }
.crumbs { display: flex; align-items: center; height: 24px; font-size: 17.9px; }
.crumb-a { color: #4a7be0; }
.crumb-s { color: #8a8f98; margin: 0 12px; }
.crumb-c { color: #6c757d; }
.title-row { display: flex; align-items: center; margin: 22px 0 0 -7px; height: 64px; gap: 25px; }
.back { flex: none; }
.title { margin: 0; font-family: "Inter", sans-serif; font-weight: 800; font-size: 57.5px; line-height: 64px; color: #252a44; white-space: nowrap; }

.content { padding: 45px 91px 0 92px; }
.card { background: #fff; box-shadow: 0 0 2px rgba(0,0,0,.05); }
.card-head { height: 121px; border-bottom: 1px solid #ccc; display: flex; align-items: center; justify-content: space-between; padding: 0 98px 0 89px; }
.card-title { margin: 0; font-family: "Inter", sans-serif; font-weight: 800; font-size: 32px; color: #252a44; white-space: nowrap; letter-spacing: .6px; }
.form { display: grid; grid-template-columns: 1fr 1fr; column-gap: 90px; row-gap: 40px; padding: 54px 112px 0; }
.field { display: flex; flex-direction: column; gap: 12px; }
.lbl { font-size: 20px; line-height: 28px; color: #3b3f4a; }
.lbl i { color: #f9503f; font-style: normal; }
.lbl .star-tight { margin-left: 3px; }
.input-wrap { position: relative; }
.ctl { display: block; width: 100%; height: 60px; border: 1px solid #ccc; border-radius: 8px; background: #fff; font-family: "Noto Sans", sans-serif; font-size: 20.7px; color: #252a44; padding: 0 24px; outline: 0; }
.sel { appearance: none; -webkit-appearance: none; font-size: 20px; padding-left: 30px; }
.cal { position: absolute; right: 19px; top: 14px; }
.sel-chev { position: absolute; right: 8px; top: 26px; }

.taskbar { flex: 0 0 72px; background: #1c1c1c; border-top: 2px solid #2f2f2f; display: flex; align-items: center; padding-left: 266px; color: #eee; font-family: "Open Sans", sans-serif; position: relative; z-index: 2; }
.win { flex: none; margin-right: 19px; }
.searchpill { width: 329px; height: 48px; border-radius: 24px; background: #3b3b3b; border: 3px solid #555; display: flex; align-items: center; padding-left: 16px; margin-right: 4px; }
.buscar { font-size: 19px; color: #ddd; margin-left: 14px; flex: 1; }
.pill-in { width: 79px; height: 42px; border-radius: 21px; background: #585858; display: flex; align-items: center; justify-content: center; }
.tb-cell { width: 66px; height: 60px; display: flex; flex-direction: column; align-items: center; justify-content: center; position: relative; }
.tb-cell-on::before { content: ""; position: absolute; top: 0; bottom: 0; left: 4px; right: 4px; z-index: -1; background: #2d2d2d; border-radius: 6px; box-shadow: 2px 0 0 #333; }
.app { width: 35px; height: 35px; display: block; }
.dot { position: absolute; bottom: 1px; left: 30px; width: 7px; height: 5px; border-radius: 3px; background: #9a9a9a; }
.dot-none { display: none; }
.dot-on { left: 21px; width: 24px; height: 5px; background: #60cdff; }
.chrome-ic { width: 36px; height: 36px; border-radius: 50%; background: conic-gradient(from -28deg, #ea4335 0 122deg, #fbc02d 122deg 240deg, #34a853 240deg 332deg, #ea4335 332deg); display: flex; align-items: center; justify-content: center; }
.chrome-in { width: 17px; height: 17px; border-radius: 50%; background: #3f7fe8; box-shadow: 0 0 0 3px #fff; }
.teams-wrap { position: relative; display: block; }
.teams-badge { position: absolute; left: 21px; top: -10px; width: 23px; height: 23px; border-radius: 50%; background: #c4281c; color: #fff; font-size: 15px; display: flex; align-items: center; justify-content: center; }
.tray { position: absolute; left: 1482px; top: 0; bottom: 0; display: flex; align-items: center; }
.tray-chev { flex: none; }
.tray-od { flex: none; margin-left: 25px; }
.lang { display: flex; flex-direction: column; align-items: center; font-size: 18px; line-height: 24px; width: 50px; margin-left: 19px; }
.tray-wifi { flex: none; margin-left: 18px; }
.tray-vol { flex: none; margin-left: 9px; }
.tray-bat { flex: none; margin-left: 9px; }
.clock { display: flex; flex-direction: column; align-items: flex-end; font-size: 18px; line-height: 25px; width: 100px; margin-left: 21px; white-space: nowrap; }
.tray-bell { flex: none; margin-left: 12px; }

.toast { position: absolute; left: 459px; top: 90px; width: 990px; height: 177px; border-radius: 8px; background: #fcd3d2; color: #f9503f; display: flex; align-items: center; padding: 0 31px 0 89px; }
.toast-body { flex: 1; }
.toast p { margin: 0; font-size: 20px; line-height: 33px; white-space: nowrap; letter-spacing: .05px; }
.toast b { font-weight: 700; }
.toast-x { flex: none; }
```
